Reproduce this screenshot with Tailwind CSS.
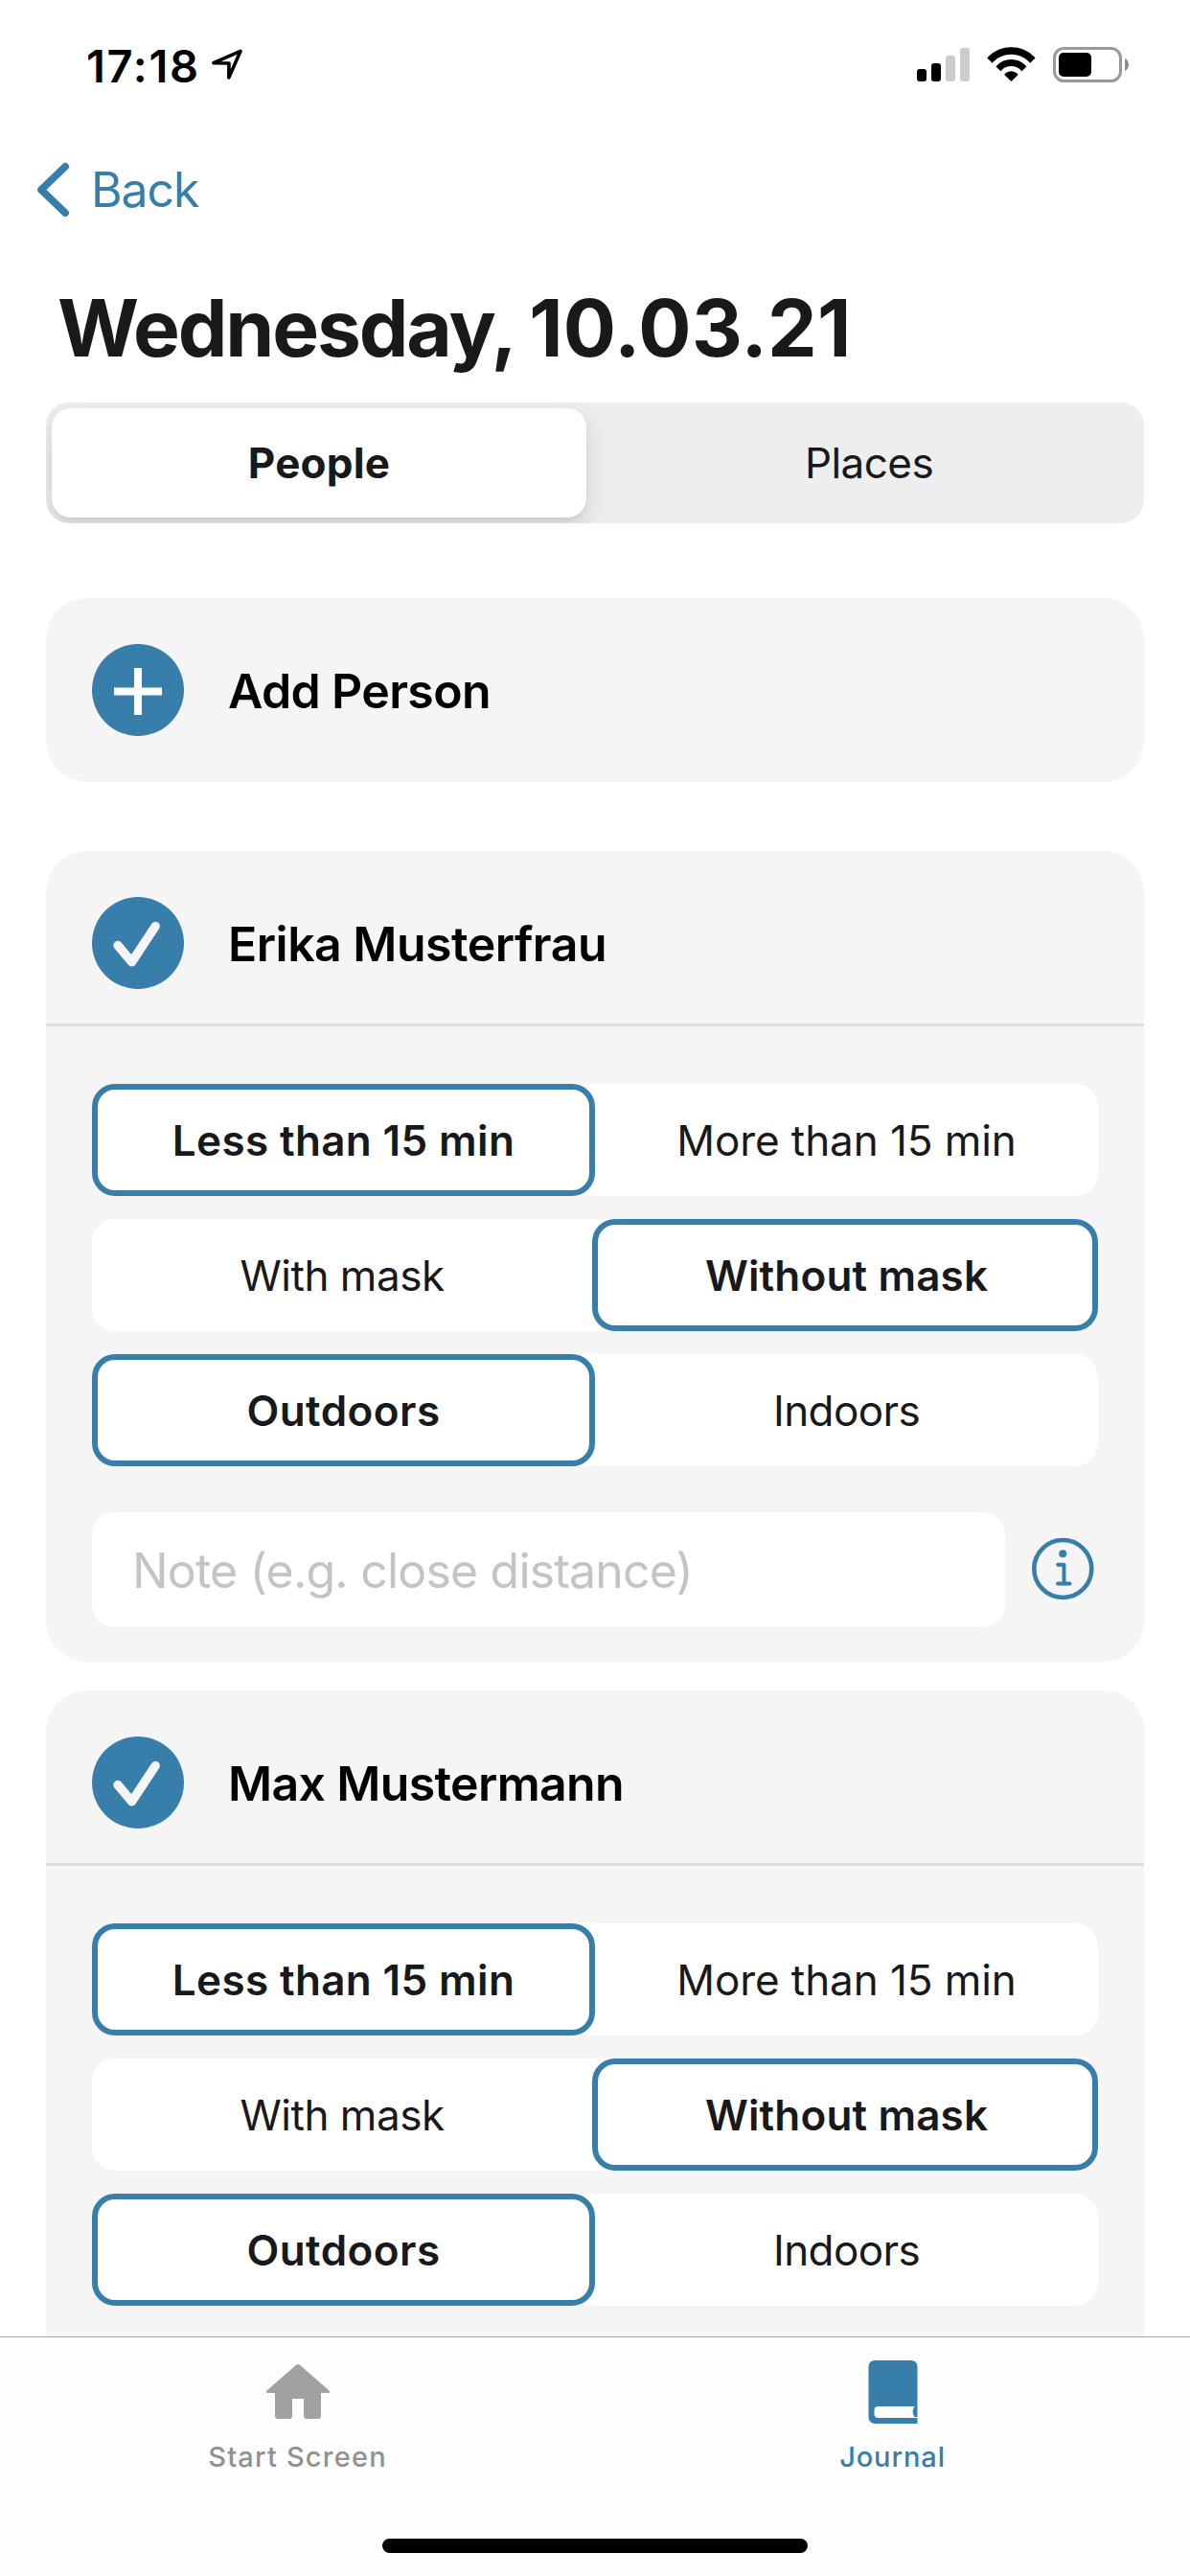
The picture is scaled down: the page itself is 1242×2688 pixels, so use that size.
<!DOCTYPE html>
<html lang="en">
<head>
<meta charset="utf-8">
<title>Journal</title>
<script src="https://cdn.jsdelivr.net/npm/@tailwindcss/browser@4"></script>
</head>
<body class="bg-white">
<div class="w-[1242px] h-[2688px] flex flex-col overflow-hidden bg-white font-['Inter',sans-serif] text-[#18191b]">
  <!-- Status bar -->
  <div class="h-[136px] shrink-0 flex items-center justify-between pl-[90px] pr-[62px] text-black">
    <div class="flex items-center">
      <span class="text-[47px] leading-none font-semibold tracking-[1.7px] whitespace-nowrap">17:18</span>
      <svg class="w-[36px] h-[36px] ml-[10px]" viewBox="218 50 36 36" fill="none" stroke="currentColor" stroke-width="3.6" stroke-linejoin="round"><path d="M250 53.4 L221.8 65.6 L238 66 L237.8 81 Z"/></svg>
    </div>
    <svg class="w-[224px] h-[40px]" viewBox="956 48 224 40">
      <rect x="957" y="72" width="10" height="13" rx="3"/>
      <rect x="972" y="66" width="10" height="19" rx="3"/>
      <rect x="987" y="58" width="10" height="27" rx="3" fill="#ccc"/>
      <rect x="1002" y="50" width="10" height="35" rx="3" fill="#ccc"/>
      <clipPath id="fan"><path d="M1055.4 85 L1018 48.5 V40 H1093 V48.5 Z"/></clipPath>
      <g clip-path="url(#fan)" fill="none" stroke="#000">
        <circle cx="1055.4" cy="83.2" r="30.2" stroke-width="7.6"/>
        <circle cx="1055.4" cy="83.2" r="17.6" stroke-width="7"/>
        <circle cx="1055.4" cy="83.2" r="4.5" stroke-width="9"/>
      </g>
      <rect x="1100.5" y="50.5" width="69" height="34" rx="10" fill="none" stroke="#999" stroke-width="3"/>
      <rect x="1105" y="55" width="34" height="25" rx="5"/>
      <path d="M1174 61 C1179.300 63 1179.300 72 1174 74 Z" fill="#8c8c8c"/>
    </svg>
  </div>

  <!-- Navigation -->
  <div class="h-[124px] shrink-0 flex items-center pl-[36px] text-[#377eaa]">
    <svg class="w-[40px] h-[60px]" viewBox="36 168 40 60" fill="none" stroke="currentColor" stroke-width="7.6" stroke-linecap="round" stroke-linejoin="round"><path d="M68.200 173.800 L43 198 L68.200 222.200"/></svg>
    <span class="ml-[19px] text-[50px] leading-none tracking-[-1.1px]">Back</span>
  </div>

  <!-- Title -->
  <h1 class="h-[160px] shrink-0 flex items-center pt-[5px] pl-[60px] text-[82px] leading-none font-bold whitespace-nowrap"><span class="tracking-[-2.1px]">Wednesday,&nbsp;</span><span class="-ml-[3px] tracking-[0.3px]">10.03.21</span></h1>

  <div class="flex-1 min-h-0 overflow-hidden px-[48px]">
    <!-- People / Places switch -->
    <div class="h-[126px] flex rounded-[24px] bg-[#eeeeee] p-[6px] overflow-hidden text-[44px] leading-none">
      <div class="w-[558px] flex items-center justify-center rounded-[20px] bg-white font-bold tracking-[0.2px] shadow-[0_9px_24px_rgba(0,0,0,0.14),0_3px_3px_rgba(0,0,0,0.04)]">People</div>
      <div class="flex-1 flex items-center justify-center pl-[14px] tracking-[-0.55px]">Places</div>
    </div>

    <!-- Add person -->
    <div class="mt-[78px] h-[192px] flex items-center rounded-[42px] bg-[#f5f5f5] px-[48px]">
      <svg class="w-[96px] h-[96px] shrink-0" viewBox="0 0 96 96"><circle cx="48" cy="48" r="48" fill="#377eaa"/><path d="M23 49.500 H73 M48 25 V74" stroke="#fff" stroke-width="8" fill="none"/></svg>
      <span class="ml-[46px] pt-[2px] text-[50px] leading-none font-semibold tracking-[-0.65px] text-black">Add Person</span>
    </div>

    <!-- Erika Musterfrau -->
    <section class="mt-[72px] h-[846px] rounded-[42px] bg-[#f5f5f5]">
      <div class="h-[183px] flex items-center border-b-[3px] border-[#dedede] pl-[48px] pt-[12px]">
        <svg class="w-[96px] h-[96px] shrink-0" viewBox="0 0 96 96"><circle cx="48" cy="48" r="48" fill="#377eaa"/><path d="M27 50.500 L41.500 67.800 L66.200 30.500" stroke="#f5f5f5" stroke-width="9.400" stroke-linecap="round" stroke-linejoin="round" fill="none"/></svg>
        <span class="ml-[46px] pt-[2px] text-[50px] leading-none font-semibold tracking-[-0.52px] text-black">Erika Musterfrau</span>
      </div>
      <div class="px-[48px] pt-[60px] flex flex-col gap-[24px] text-[44px] leading-none">
        <div class="h-[117px] flex rounded-[24px] bg-white">
          <div class="w-[525px] flex items-center justify-center rounded-[24px] border-[6px] border-[#377eaa] font-semibold tracking-[0.36px]">Less than 15 min</div>
          <div class="w-[525px] flex items-center justify-center tracking-[-0.08px]">More than 15 min</div>
        </div>
        <div class="h-[117px] flex rounded-[24px] bg-white">
          <div class="w-[522px] flex items-center justify-center tracking-[-0.47px]">With mask</div>
          <div class="w-[528px] flex items-center justify-center rounded-[24px] border-[6px] border-[#377eaa] pl-[3px] font-semibold tracking-[0.15px]">Without mask</div>
        </div>
        <div class="h-[117px] flex rounded-[24px] bg-white">
          <div class="w-[525px] flex items-center justify-center rounded-[24px] border-[6px] border-[#377eaa] font-semibold tracking-[0.45px]">Outdoors</div>
          <div class="w-[525px] flex items-center justify-center tracking-[-0.6px]">Indoors</div>
        </div>
        <div class="mt-[24px] flex items-center">
          <div class="w-[953px] h-[120px] flex items-center rounded-[24px] bg-white pl-[42px] pt-[2px] text-[50px] tracking-[-0.81px] text-[#c4c4c6]">Note (e.g. close distance)</div>
          <svg class="ml-[27px] w-[68px] h-[68px]" viewBox="0 0 68 68" fill="none" stroke="#377eaa" stroke-width="4.600" stroke-linecap="round" stroke-linejoin="round"><circle cx="33.300" cy="33" r="30"/><circle cx="33.300" cy="17.300" r="4" fill="#377eaa" stroke="none"/><path d="M28.200 28.700 H34.500 V48.600 M28 48.600 H40.500" stroke-width="4"/></svg>
        </div>
      </div>
    </section>

    <!-- Max Mustermann -->
    <section class="mt-[30px] h-[846px] rounded-[42px] bg-[#f5f5f5]">
      <div class="h-[183px] flex items-center border-b-[3px] border-[#dedede] pl-[48px] pt-[12px]">
        <svg class="w-[96px] h-[96px] shrink-0" viewBox="0 0 96 96"><circle cx="48" cy="48" r="48" fill="#377eaa"/><path d="M27 50.500 L41.500 67.800 L66.200 30.500" stroke="#f5f5f5" stroke-width="9.400" stroke-linecap="round" stroke-linejoin="round" fill="none"/></svg>
        <span class="ml-[46px] pt-[2px] text-[50px] leading-none font-semibold tracking-[-0.65px] text-black">Max Mustermann</span>
      </div>
      <div class="px-[48px] pt-[60px] flex flex-col gap-[24px] text-[44px] leading-none">
        <div class="h-[117px] flex rounded-[24px] bg-white">
          <div class="w-[525px] flex items-center justify-center rounded-[24px] border-[6px] border-[#377eaa] font-semibold tracking-[0.36px]">Less than 15 min</div>
          <div class="w-[525px] flex items-center justify-center tracking-[-0.08px]">More than 15 min</div>
        </div>
        <div class="h-[117px] flex rounded-[24px] bg-white">
          <div class="w-[522px] flex items-center justify-center tracking-[-0.47px]">With mask</div>
          <div class="w-[528px] flex items-center justify-center rounded-[24px] border-[6px] border-[#377eaa] pl-[3px] font-semibold tracking-[0.15px]">Without mask</div>
        </div>
        <div class="h-[117px] flex rounded-[24px] bg-white">
          <div class="w-[525px] flex items-center justify-center rounded-[24px] border-[6px] border-[#377eaa] font-semibold tracking-[0.45px]">Outdoors</div>
          <div class="w-[525px] flex items-center justify-center tracking-[-0.6px]">Indoors</div>
        </div>
      </div>
    </section>
  </div>

  <!-- Tab bar -->
  <div class="h-[250px] shrink-0 flex flex-col border-t border-[#a8a8a8] bg-[#fdfdfd] text-[29px] leading-none font-medium">
    <div class="h-[146px] flex">
      <div class="w-1/2 flex flex-col items-center pt-[21px] text-[#919191]">
        <svg class="w-[72px] h-[72px]" viewBox="274 2460 72 72" fill="#a1a1a1"><path d="M308.400 2467.600 Q310 2466.300 311.600 2467.600 L342.500 2494.500 Q344 2497 341.500 2497 H334 V2521 Q334 2524 331 2524 H319 Q316 2524 316 2521 V2503 H304 V2521 Q304 2524 301 2524 H289 Q286 2524 286 2521 V2497 H278.500 Q276 2497 277.500 2494.500 Z"/></svg>
        <span class="mt-[17px] tracking-[1.2px]">Start Screen</span>
      </div>
      <div class="w-1/2 flex flex-col items-center pt-[21px] text-[#377eaa]">
        <svg class="w-[72px] h-[72px]" viewBox="895.500 2460 72 72"><path d="M913 2463 H950 Q957 2463 957 2470 V2529 H913 Q906 2529 906 2522 V2470 Q906 2463 913 2463 Z" fill="#377eaa"/><path d="M916 2511 H954 Q950.500 2516.500 953.800 2522 H957 V2523 H916 Q912 2523 912 2519 V2515 Q912 2511 916 2511 Z" fill="#fdfdfd"/></svg>
        <span class="mt-[17px] tracking-[0.9px]">Journal</span>
      </div>
    </div>
    <div class="mt-[64px] mx-auto w-[444px] h-[15px] rounded-full bg-black"></div>
  </div>
</div>
</body>
</html>
